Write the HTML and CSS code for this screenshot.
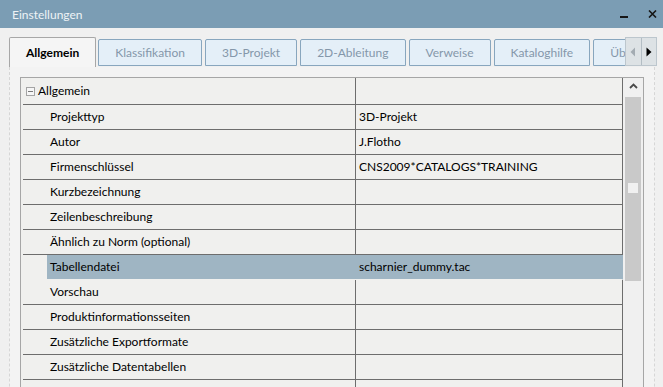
FILE: index.html
```
<!DOCTYPE html>
<html lang="de">
<head>
<meta charset="utf-8">
<title>Einstellungen</title>
<link rel="stylesheet" href="styles.css">
</head>
<body>
<div class="window">
  <header class="titlebar">
    <span class="title">Einstellungen</span>
    <div class="win-controls">
      <svg class="btn-min" width="8" height="8" viewBox="0 0 8 8"><rect x="0" y="6" width="8" height="2" fill="#161616"/></svg>
      <svg class="btn-close" width="9" height="8" viewBox="0 0 9 8"><path d="M1 0.5 L8 7.5 M8 0.5 L1 7.5" stroke="#161616" stroke-width="1.6"/></svg>
    </div>
  </header>

  <div class="tabrow">
    <div class="tabs">
      <div class="tab active">Allgemein</div>
      <div class="tab">Klassifikation</div>
      <div class="tab">3D-Projekt</div>
      <div class="tab">2D-Ableitung</div>
      <div class="tab">Verweise</div>
      <div class="tab">Kataloghilfe</div>
      <div class="tab">Übersicht</div>
    </div>
    <div class="tab-arrows">
      <div class="arrow">
        <svg width="6" height="10" viewBox="0 0 6 10"><path d="M5 0.5 L5 9.5 L0.5 5 Z" fill="#a3abb2"/></svg>
      </div>
      <div class="arrow">
        <svg width="6" height="10" viewBox="0 0 6 10"><path d="M0.5 0.5 L0.5 9.5 L5.5 5 Z" fill="#000"/></svg>
      </div>
    </div>
  </div>

  <div class="panel">
    <div class="grid">
      <div class="rows">
        <div class="row group">
          <div class="label">
            <span class="toggle"><span class="minus"></span></span>
            <span>Allgemein</span>
          </div>
          <div class="value"></div>
        </div>
        <div class="row"><div class="label"><span class="name">Projekttyp</span></div><div class="value">3D-Projekt</div></div>
        <div class="row"><div class="label"><span class="name">Autor</span></div><div class="value">J.Flotho</div></div>
        <div class="row"><div class="label"><span class="name">Firmenschlüssel</span></div><div class="value">CNS2009*CATALOGS*TRAINING</div></div>
        <div class="row"><div class="label"><span class="name">Kurzbezeichnung</span></div><div class="value"></div></div>
        <div class="row"><div class="label"><span class="name">Zeilenbeschreibung</span></div><div class="value"></div></div>
        <div class="row"><div class="label"><span class="name">Ähnlich zu Norm (optional)</span></div><div class="value"></div></div>
        <div class="row selected"><div class="label"><span class="name">Tabellendatei</span></div><div class="value">scharnier_dummy.tac</div></div>
        <div class="row"><div class="label"><span class="name">Vorschau</span></div><div class="value"></div></div>
        <div class="row"><div class="label"><span class="name">Produktinformationsseiten</span></div><div class="value"></div></div>
        <div class="row"><div class="label"><span class="name">Zusätzliche Exportformate</span></div><div class="value"></div></div>
        <div class="row"><div class="label"><span class="name">Zusätzliche Datentabellen</span></div><div class="value"></div></div>
        <div class="row"><div class="label"><span class="name"></span></div><div class="value"></div></div>
      </div>
      <div class="scrollbar">
        <div class="scroll-up">
          <svg width="9" height="6" viewBox="0 0 9 6"><path d="M1 5 L4.5 1.5 L8 5" fill="none" stroke="#4a4a4a" stroke-width="1.8"/></svg>
        </div>
        <div class="thumb"><div class="grip"></div></div>
      </div>
    </div>
  </div>
</div>
</body>
</html>
```
FILE: styles.css
```
* { box-sizing: border-box; }

html, body {
  margin: 0;
  padding: 0;
  background: #f0f0f0;
}

body {
  font-family: Lato, "Noto Sans", "Liberation Sans", sans-serif;
  font-size: 12px;
  color: #000;
}

.window {
  width: 663px;
  height: 387px;
  overflow: hidden;
  background: #f0f0f0;
}

/* title bar */
.titlebar {
  height: 28px;
  background: #7b9db4;
  display: flex;
  align-items: center;
  justify-content: space-between;
  padding: 0 6px 0 12px;
}

.title {
  color: #eef3f6;
  font-size: 12px;
}

.win-controls {
  display: flex;
  align-items: center;
  gap: 20px;
}

.win-controls svg { display: block; }

/* tabs */
.tabrow {
  height: 39px;
  margin: 0 6px 0 9px;
  display: flex;
  align-items: flex-end;
}

.tabs {
  flex: 1;
  min-width: 0;
  height: 100%;
  overflow: hidden;
  display: flex;
  align-items: flex-end;
  gap: 3px;
}

.tab {
  flex: none;
  height: 27px;
  line-height: 25px;
  padding: 0 16px;
  margin-bottom: 1px;
  border: 1px solid #88a6be;
  border-radius: 2px 2px 0 0;
  background: #e4eff8;
  color: #8497aa;
  white-space: nowrap;
}

.tab.active {
  height: 30px;
  line-height: 29px;
  padding: 0 16px;
  margin-right: -1px;
  margin-bottom: 0;
  border-color: #a7a7a7;
  border-bottom: none;
  background: #f5f5f5;
  color: #000;
  font-weight: bold;
}

.tab-arrows {
  flex: none;
  width: 32px;
  height: 29px;
  margin-bottom: 1px;
  display: flex;
  border: 1px solid #bcc6cd;
  background: #dde2e5;
}

.arrow {
  flex: 1;
  display: flex;
  align-items: center;
  justify-content: center;
}

.arrow + .arrow { border-left: 1px solid #b3bdc4; }

.arrow svg { display: block; }

/* panel */
.panel {
  margin: 0 8px 0 9px;
  height: 400px;
  padding: 10px 10px 0 10px;
  border-left: 1px dashed #d6d6d6;
  border-right: 1px dashed #d6d6d6;
  background: #f3f3f3;
}

.grid {
  height: 400px;
  border: 1px solid #a6a6a6;
  background: #f0f0ee;
  display: flex;
}

.rows {
  width: 600px;
  margin-left: 2px;
  display: flex;
  flex-direction: column;
}

.row {
  display: flex;
  height: 25px;
  line-height: 24px;
  border-bottom: 1px solid #6d6d6d;
  border-right: 1px solid #6d6d6d;
}

.row.group {
  height: 27px;
  line-height: 26px;
}

.label {
  width: 332px;
  flex: none;
  display: flex;
  align-items: center;
  white-space: nowrap;
}

.row.group .label { padding-left: 3px; }

.toggle {
  width: 9px;
  height: 9px;
  margin: 1px 3px 0 0;
  border: 1px solid #a4a4a4;
  background: #f6f6f6;
  display: flex;
  align-items: center;
  justify-content: center;
}

.minus {
  width: 5px;
  height: 1px;
  background: #7a7a7a;
}

.name {
  margin-left: 24px;
  padding-left: 3px;
  align-self: stretch;
  flex: 1;
}

.value {
  flex: 1;
  border-left: 1px solid #6d6d6d;
  padding-left: 3px;
  white-space: nowrap;
}

.row.selected {
  border-bottom-color: transparent;
  border-right-color: #9fb5c3;
}

.row.selected .name,
.row.selected .value {
  background: #9fb5c3;
}

.row.selected .value { border-left-color: #9fb5c3; }

/* scrollbar */
.scrollbar {
  width: 20px;
  flex: none;
  padding: 0 2px;
  background: #f0f0f0;
}

.scroll-up {
  height: 19px;
  display: flex;
  align-items: center;
  justify-content: center;
}

.scroll-up svg { display: block; margin-top: -3px; }

.thumb {
  height: 184px;
  background: #c9c9c9;
  padding: 86px 0 0 3px;
}

.grip {
  width: 10px;
  height: 10px;
  background: #f0f0f0;
}
```
